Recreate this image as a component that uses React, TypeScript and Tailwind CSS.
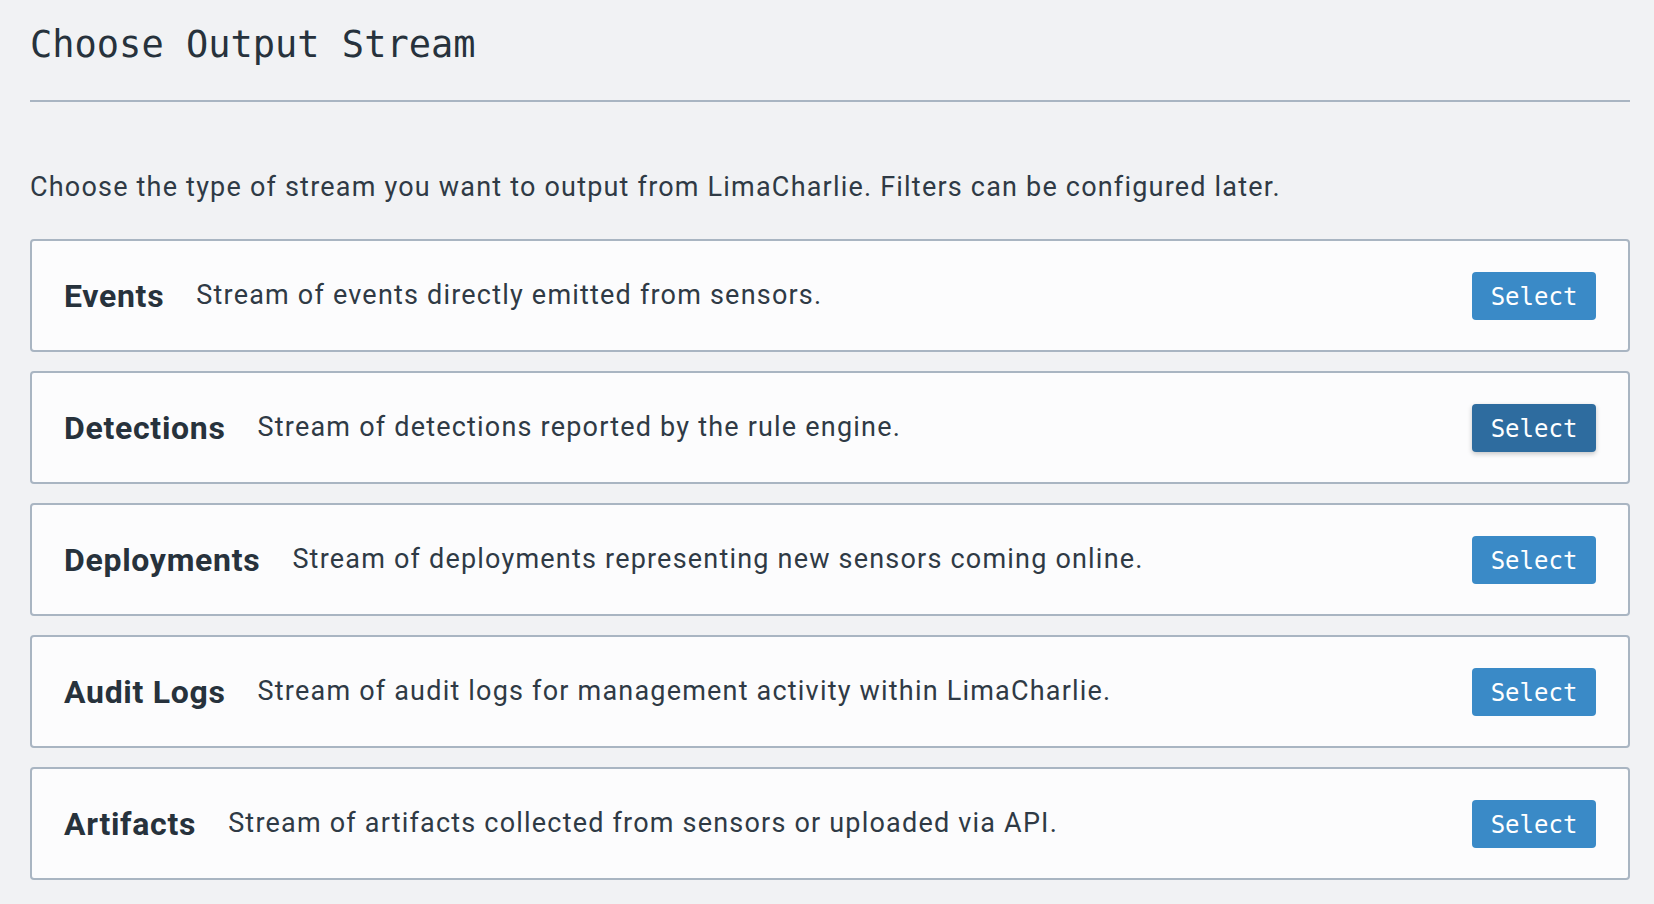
import React from "react";

const streams = [
  { title: "Events", desc: "Stream of events directly emitted from sensors.", hover: false },
  { title: "Detections", desc: "Stream of detections reported by the rule engine.", hover: true },
  { title: "Deployments", desc: "Stream of deployments representing new sensors coming online.", hover: false },
  { title: "Audit Logs", desc: "Stream of audit logs for management activity within LimaCharlie.", hover: false },
  { title: "Artifacts", desc: "Stream of artifacts collected from sensors or uploaded via API.", hover: false },
];

export default function App() {
  return (
    <div
      className="min-h-[904px] w-full bg-[#f1f2f4] pl-[30px] pr-[24px] pt-[23px] text-[#2b3641]"
      style={{ fontFamily: "Roboto, 'Noto Sans', sans-serif" }}
    >
      <h1
        className="text-[37px] leading-[44px] font-normal text-[#27323c]"
        style={{ fontFamily: "'DejaVu Sans Mono', 'Liberation Mono', monospace" }}
      >
        Choose Output Stream
      </h1>
      <div className="mt-[33px] h-[2px] bg-[#a9b5c2]" />
      <p className="mt-[67px] text-[27px] leading-[36px] tracking-[1.2px] text-[#2f3a45]">
        Choose the type of stream you want to output from LimaCharlie. Filters can be configured later.
      </p>
      <div className="mt-[34px] flex flex-col gap-[19px]">
        {streams.map((s) => (
          <div
            key={s.title}
            className="flex h-[113px] items-center rounded-[4px] border-2 border-[#a9b5c2] bg-[#fcfcfd] px-[32px]"
          >
            <span className="text-[32px] font-bold tracking-[0.7px] text-[#27323c]">{s.title}</span>
            <span className="ml-[32px] text-[27px] tracking-[1.2px] text-[#2f3a45]">{s.desc}</span>
            <button
              className={
                "ml-auto flex h-[48px] w-[124px] items-center justify-center rounded-[4px] pt-[3px] text-[24px] text-white " +
                (s.hover ? "bg-[#2e6c9f] shadow-[0_2px_5px_rgba(0,0,0,0.22)]" : "bg-[#3a8ac7]")
              }
              style={{ fontFamily: "'DejaVu Sans Mono', 'Liberation Mono', monospace" }}
            >
              Select
            </button>
          </div>
        ))}
      </div>
    </div>
  );
}
